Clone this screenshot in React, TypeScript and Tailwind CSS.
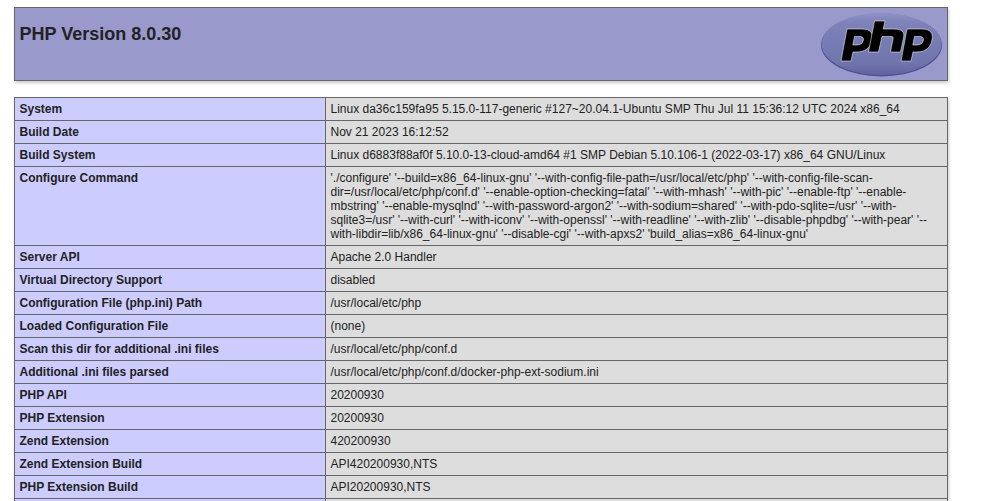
const rows: [string, string][] = [
  ["System", "Linux da36c159fa95 5.15.0-117-generic #127~20.04.1-Ubuntu SMP Thu Jul 11 15:36:12 UTC 2024 x86_64"],
  ["Build Date", "Nov 21 2023 16:12:52"],
  ["Build System", "Linux d6883f88af0f 5.10.0-13-cloud-amd64 #1 SMP Debian 5.10.106-1 (2022-03-17) x86_64 GNU/Linux"],
  ["Configure Command", "'./configure' '--build=x86_64-linux-gnu' '--with-config-file-path=/usr/local/etc/php' '--with-config-file-scan-dir=/usr/local/etc/php/conf.d' '--enable-option-checking=fatal' '--with-mhash' '--with-pic' '--enable-ftp' '--enable-mbstring' '--enable-mysqlnd' '--with-password-argon2' '--with-sodium=shared' '--with-pdo-sqlite=/usr' '--with-sqlite3=/usr' '--with-curl' '--with-iconv' '--with-openssl' '--with-readline' '--with-zlib' '--disable-phpdbg' '--with-pear' '--with-libdir=lib/x86_64-linux-gnu' '--disable-cgi' '--with-apxs2' 'build_alias=x86_64-linux-gnu'"],
  ["Server API", "Apache 2.0 Handler"],
  ["Virtual Directory Support", "disabled"],
  ["Configuration File (php.ini) Path", "/usr/local/etc/php"],
  ["Loaded Configuration File", "(none)"],
  ["Scan this dir for additional .ini files", "/usr/local/etc/php/conf.d"],
  ["Additional .ini files parsed", "/usr/local/etc/php/conf.d/docker-php-ext-sodium.ini"],
  ["PHP API", "20200930"],
  ["PHP Extension", "20200930"],
  ["Zend Extension", "420200930"],
  ["Zend Extension Build", "API420200930,NTS"],
  ["PHP Extension Build", "API20200930,NTS"],
  ["Debug Build", "no"],
];

function Logo() {
  const bowl =
    "M29 17 L44 17 C52.5 17 55.5 21 54 28 C52.5 36 47 40 39 40 L35 40 L33 49 L23 49 Z M36.5 24.5 L34.8 33 L38.5 33 C42.5 33 44.8 31.5 45.4 28 C45.8 25.5 44.5 24.5 41 24.5 Z";
  return (
    <svg width="125" height="66" viewBox="0 0 125 66" className="block">
      <defs>
        <linearGradient id="g" x1="0" y1="0" x2="0" y2="1">
          <stop offset="0" stopColor="#8f92c4" />
          <stop offset="0.15" stopColor="#7e82b9" />
          <stop offset="0.8" stopColor="#7175ae" />
          <stop offset="1" stopColor="#5f639f" />
        </linearGradient>
      </defs>
      <ellipse cx="63.5" cy="33" rx="60.5" ry="31.5" fill="#4d5092" />
      <ellipse cx="63.5" cy="32" rx="60" ry="31" fill="url(#g)" />
      <g fill="#000" fillRule="evenodd" stroke="#fff" strokeOpacity="0.65" strokeWidth="0.8">
        <path d={bowl} />
        <path d="M56.5 9 L67 9 L65.2 17 L76 17 C84 17 87 20 85.5 26 L82.5 40 L72.5 40 L75 27 C75.5 25 75 24.5 73 24.5 L64 24.5 L60.5 40 L50.5 40 Z" />
        <path d={bowl} transform="translate(60 0)" />
      </g>
    </svg>
  );
}

export default function App() {
  return (
    <div className="h-[501px] w-[992px] overflow-hidden bg-white pl-[13.5px] pt-[7px] font-['Liberation_Sans',Arial,sans-serif] leading-[normal] text-[#222]">
      <table className="w-[934px] border-collapse shadow-[1px_2px_3px_#ccc]">
        <tbody>
          <tr>
            <td className="h-[73px] border border-[#666] bg-[#99c] px-[5px] py-[4px] align-baseline text-[12px]">
              <div className="float-right mb-[-4px] mr-[-1px]">
                <Logo />
              </div>
              <h1 className="mt-[12px] text-[18px] font-bold">PHP Version 8.0.30</h1>
            </td>
          </tr>
        </tbody>
      </table>
      <table className="mt-[16px] w-[934px] table-fixed border-collapse shadow-[1px_2px_3px_#ccc]">
        <tbody>
          {rows.map(([k, v]) => (
            <tr key={k}>
              <td className="w-[311px] border border-[#666] bg-[#ccf] px-[5px] py-[4px] align-baseline text-[12px] font-bold">{k}</td>
              <td className="border border-[#666] bg-[#ddd] px-[5px] py-[4px] align-baseline text-[12px] [overflow-wrap:anywhere]">{v}</td>
            </tr>
          ))}
        </tbody>
      </table>
    </div>
  );
}
